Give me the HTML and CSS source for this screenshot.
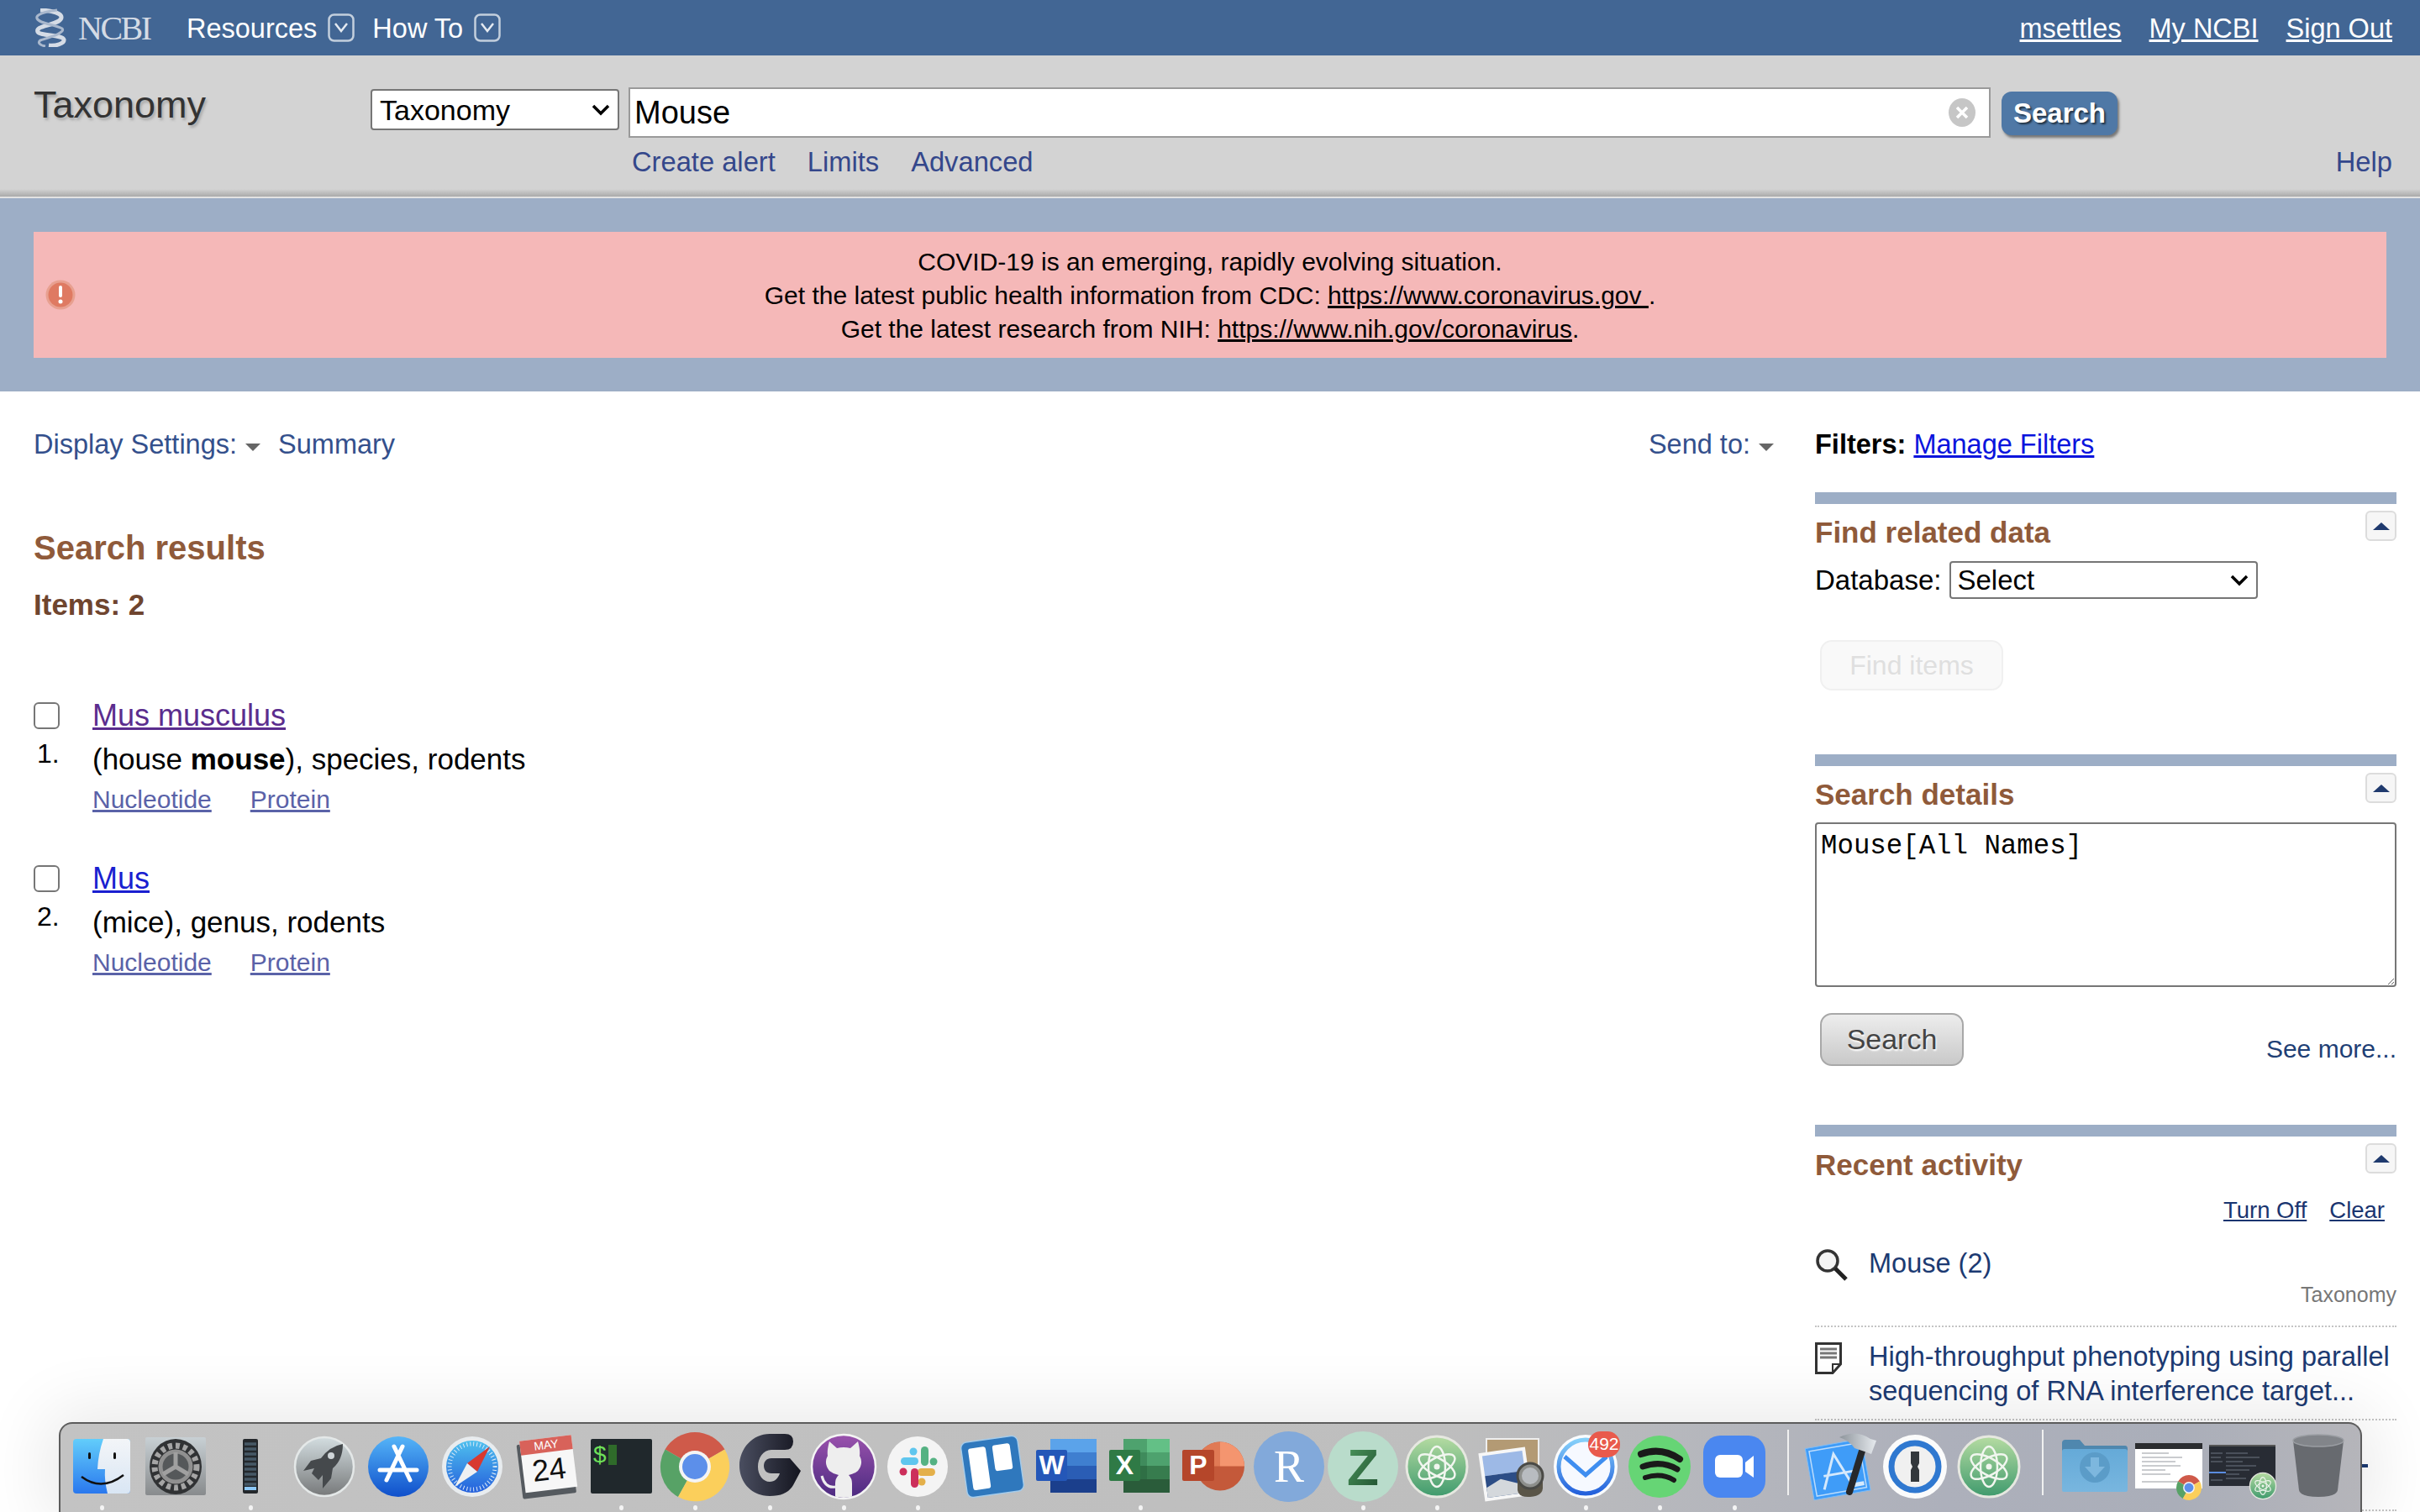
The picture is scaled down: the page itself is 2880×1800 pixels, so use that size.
FILE: index.html
```html
<!DOCTYPE html>
<html>
<head>
    <link rel="stylesheet" href="styles.css">
    <title>mouse - Taxonomy - NCBI</title>
</head>
<body>
    <svg class="defs">
        <defs>
            <linearGradient id="g-finder" x1="0" y1="0" x2="0" y2="1"><stop offset="0" stop-color="#62cdfb"/><stop offset="1" stop-color="#2a78ee"/></linearGradient>
            <linearGradient id="g-finder2" x1="0" y1="0" x2="0" y2="1"><stop offset="0" stop-color="#f3f5f8"/><stop offset="1" stop-color="#d9e6f4"/></linearGradient>
            <linearGradient id="g-prefs" x1="0" y1="0" x2="0" y2="1"><stop offset="0" stop-color="#c8d0d4"/><stop offset="1" stop-color="#888b8d"/></linearGradient>
            <linearGradient id="g-launch" x1="0" y1="0" x2="0" y2="1"><stop offset="0" stop-color="#d3dde0"/><stop offset="1" stop-color="#77797a"/></linearGradient>
            <linearGradient id="g-store" x1="0" y1="0" x2="0" y2="1"><stop offset="0" stop-color="#55b5f8"/><stop offset="1" stop-color="#0f4fcb"/></linearGradient>
            <linearGradient id="g-safari" x1="0" y1="0" x2="0" y2="1"><stop offset="0" stop-color="#4fc0ee"/><stop offset="1" stop-color="#2560dc"/></linearGradient>
            <linearGradient id="g-g" x1="0" y1="0" x2="1" y2="0"><stop offset="0" stop-color="#4a4e60"/><stop offset="1" stop-color="#14151f"/></linearGradient>
            <linearGradient id="g-hub" x1="0" y1="0" x2="0" y2="1"><stop offset="0" stop-color="#9a52ad"/><stop offset="1" stop-color="#4b2a80"/></linearGradient>
            <linearGradient id="g-atom" x1="0" y1="0" x2="0" y2="1"><stop offset="0" stop-color="#b6dca2"/><stop offset="1" stop-color="#3f9a6d"/></linearGradient>
            <linearGradient id="g-ring" x1="0" y1="0" x2="0" y2="1"><stop offset="0" stop-color="#85d0fa"/><stop offset="1" stop-color="#2461dc"/></linearGradient>
            <linearGradient id="g-z" x1="0" y1="0" x2="1" y2="1"><stop offset="0" stop-color="#4e9a5f"/><stop offset="1" stop-color="#1f4f2f"/></linearGradient>
            <linearGradient id="g-folder" x1="0" y1="0" x2="0" y2="1"><stop offset="0" stop-color="#65aad8"/><stop offset="1" stop-color="#78b6df"/></linearGradient>
            <linearGradient id="g-hammer" x1="0" y1="0" x2="1" y2="0"><stop offset="0" stop-color="#8d949b"/><stop offset="1" stop-color="#e6eaee"/></linearGradient>

            <symbol id="chrome" viewBox="0 0 88 88">
                <path d="M44 44L8.500 23.500A41 41 0 0 1 79.500 23.500Z" fill="#cf5a4a"/>
                <path d="M44 44L8.500 23.500A41 41 0 0 0 24 80Z" fill="#57a266"/>
                <path d="M44 44L79.500 23.500A41 41 0 0 1 24 80Z" fill="#fbcf5b"/>
                <circle cx="44" cy="44" r="19" fill="#f4f4f4"/>
                <circle cx="44" cy="44" r="15" fill="#5c8fea"/>
            </symbol>
            <symbol id="atom" viewBox="0 0 88 88">
                <circle cx="44" cy="44" r="36" fill="url(#g-atom)" stroke="#e6e8e0" stroke-width="3"/>
                <g fill="none" stroke="#f1f6ef" stroke-width="2.500">
                    <ellipse cx="44" cy="44" rx="10" ry="24"/>
                    <ellipse cx="44" cy="44" rx="10" ry="24" transform="rotate(60 44 44)"/>
                    <ellipse cx="44" cy="44" rx="10" ry="24" transform="rotate(-60 44 44)"/>
                </g>
                <circle cx="44" cy="44" r="3.500" fill="#f1f6ef"/>
            </symbol>
        </defs>
    </svg>

    <header class="topbar">
        <a class="logo">
            <svg class="helix" viewBox="0 0 40 46">
                <path d="M8 2C30 3 38 9 30 15C20 21 2 21 5 28C8 33 34 31 36 37C37 42 26 45 18 44" fill="none" stroke="#d5dce6" stroke-width="5"/>
                <path d="M28 2C14 4 2 7 4 12C7 18 24 19 34 24C38 29 20 34 8 38C4 41 8 44 14 45" fill="none" stroke="#a9b8cd" stroke-width="3"/>
            </svg>
            <span class="logo-text">NCBI</span>
        </a>
        <a class="nav-item">Resources</a>
        <svg class="nav-drop" viewBox="0 0 32 34"><rect x="1.500" y="1.500" width="29" height="31" rx="6" fill="none" stroke="#c3cfdd" stroke-width="2.500"/><path d="M9 12L16 21L23 12" fill="none" stroke="#e4eaf1" stroke-width="2.500"/></svg>
        <a class="nav-item">How To</a>
        <svg class="nav-drop" viewBox="0 0 32 34"><rect x="1.500" y="1.500" width="29" height="31" rx="6" fill="none" stroke="#c3cfdd" stroke-width="2.500"/><path d="M9 12L16 21L23 12" fill="none" stroke="#e4eaf1" stroke-width="2.500"/></svg>
        <nav class="user-links">
            <a>msettles</a>
            <a>My NCBI</a>
            <a>Sign Out</a>
        </nav>
    </header>

    <section class="masthead">
        <div class="search-row">
            <div class="db-title">Taxonomy</div>
            <div class="select-wrap db-wrap">
                <select class="db-select"><option>Taxonomy</option></select>
                <svg class="select-arrow" viewBox="0 0 22 14"><path d="M2 2L11 11L20 2" fill="none" stroke="#000" stroke-width="3.500"/></svg>
            </div>
            <div class="term-box">
                <input class="term" value="Mouse">
                <svg class="term-clear" viewBox="0 0 34 36"><ellipse cx="17" cy="18" rx="16" ry="17" fill="#c6c6c6"/><path d="M11 12L23 24M23 12L11 24" stroke="#fff" stroke-width="3.500"/></svg>
            </div>
            <button class="search-btn">Search</button>
        </div>
        <div class="link-row">
            <a>Create alert</a>
            <a>Limits</a>
            <a>Advanced</a>
            <a class="help">Help</a>
        </div>
    </section>

    <section class="band">
        <div class="notice">
            <svg class="notice-icon" viewBox="0 0 36 36">
                <circle cx="18" cy="18" r="17.500" fill="#e8a090"/>
                <circle cx="18" cy="18" r="14.500" fill="#df7a62"/>
                <rect x="16" y="7" width="4" height="14" rx="2" fill="#fff"/>
                <circle cx="18" cy="26" r="2.500" fill="#fff"/>
            </svg>
            <div class="notice-text">
                COVID-19 is an emerging, rapidly evolving situation.<br>
                Get the latest public health information from CDC: <a>https://www.coronavirus.gov </a>.<br>
                Get the latest research from NIH: <a>https://www.nih.gov/coronavirus</a>.
            </div>
        </div>
    </section>

    <main class="content">
        <div class="results">
            <div class="toolbar">
                <a>Display Settings:</a><span class="caret"></span><a class="summary">Summary</a>
                <a class="send-to">Send to:</a><span class="caret"></span>
            </div>
            <h2 class="results-title">Search results</h2>
            <div class="items">Items: 2</div>

            <div class="result first">
                <div class="result-mark">
                    <input type="checkbox" class="check">
                    <div class="num">1.</div>
                </div>
                <div class="result-body">
                    <a class="result-name visited">Mus musculus</a>
                    <div class="result-desc">(house <b>mouse</b>), species, rodents</div>
                    <div class="result-links"><a>Nucleotide</a><a>Protein</a></div>
                </div>
            </div>

            <div class="result">
                <div class="result-mark">
                    <input type="checkbox" class="check">
                    <div class="num">2.</div>
                </div>
                <div class="result-body">
                    <a class="result-name">Mus</a>
                    <div class="result-desc">(mice), genus, rodents</div>
                    <div class="result-links"><a>Nucleotide</a><a>Protein</a></div>
                </div>
            </div>
        </div>

        <aside class="sidebar">
            <div class="filters"><b>Filters:</b> <a>Manage Filters</a></div>

            <div class="panel">
                <div class="panel-head">
                    <h3>Find related data</h3>
                    <button class="toggle"><span></span></button>
                </div>
                <div class="db-row">
                    <label>Database:</label>
                    <div class="select-wrap">
                        <select class="panel-select"><option>Select</option></select>
                        <svg class="select-arrow" viewBox="0 0 22 14"><path d="M2 2L11 11L20 2" fill="none" stroke="#000" stroke-width="3.500"/></svg>
                    </div>
                </div>
                <button class="find-items">Find items</button>
            </div>

            <div class="panel details">
                <div class="panel-head">
                    <h3>Search details</h3>
                    <button class="toggle"><span></span></button>
                </div>
                <textarea class="query">Mouse[All Names]</textarea>
                <div class="details-foot">
                    <button class="details-btn">Search</button>
                    <a class="see-more">See more...</a>
                </div>
            </div>

            <div class="panel recent">
                <div class="panel-head">
                    <h3>Recent activity</h3>
                    <button class="toggle"><span></span></button>
                </div>
                <div class="recent-tools"><a>Turn Off</a><a>Clear</a></div>
                <div class="entry">
                    <div class="entry-row">
                        <svg class="entry-icon" viewBox="0 0 40 40"><circle cx="15" cy="15" r="12" fill="#f3f3f3" stroke="#333" stroke-width="3.500"/><path d="M24 24L37 37" stroke="#222" stroke-width="5"/></svg>
                        <a>Mouse (2)</a>
                    </div>
                    <div class="entry-db">Taxonomy</div>
                </div>
                <div class="entry paper">
                    <div class="entry-row">
                        <svg class="entry-icon" viewBox="0 0 32 38"><path d="M1.500 1.500H30.500V26L21 36.500H1.500Z" fill="#fff" stroke="#333" stroke-width="3"/><path d="M6 8H26M6 13H26M6 18H26" stroke="#777" stroke-width="3"/><path d="M21 36V26H30" fill="none" stroke="#333" stroke-width="2"/></svg>
                        <a class="entry-long">High-throughput phenotyping using parallel<br>sequencing of RNA interference target...</a>
                    </div>
                </div>
                <div class="entry tail"><span class="tail-dash"></span></div>
            </div>
        </aside>
    </main>

    <footer class="dock">
        <div class="app on"><svg viewBox="0 0 88 88">
            <rect x="10" y="11" width="68" height="65" rx="4" fill="url(#g-finder)"/>
            <path d="M46 11H74Q78 11 78 15V72Q78 76 74 76H51Q47 60 48 47H39Q40 28 46 11Z" fill="url(#g-finder2)"/>
            <rect x="28" y="27" width="3" height="8" rx="1.500" fill="#111"/><rect x="58" y="27" width="3" height="8" rx="1.500" fill="#111"/>
            <path d="M20 56Q44 74 70 54" fill="none" stroke="#111" stroke-width="2.500"/>
        </svg></div>
        <div class="app"><svg viewBox="0 0 88 88">
            <rect x="8" y="9" width="72" height="69" rx="2" fill="url(#g-prefs)"/>
            <ellipse cx="44" cy="44" rx="31" ry="33" fill="#303234"/>
            <circle cx="44" cy="44" r="25" fill="none" stroke="#a5a5a5" stroke-width="7" stroke-dasharray="5 4"/>
            <circle cx="44" cy="44" r="18" fill="#55585a" stroke="#909090" stroke-width="5"/>
            <path d="M44 44V27M44 44L29 53M44 44L59 53" stroke="#a0a0a0" stroke-width="5"/>
        </svg></div>
        <div class="app on"><svg viewBox="0 0 88 88">
            <rect x="35" y="11" width="18" height="65" rx="2" fill="#23272b"/>
            <path d="M37 17H51M37 23H51M37 29H51M37 35H51M37 41H51M37 47H51M37 53H51M37 59H51M37 65H51" stroke="#465866" stroke-width="3.500"/>
            <rect x="37" y="68" width="14" height="4" fill="#8cc8f8"/>
        </svg></div>
        <div class="app"><svg viewBox="0 0 88 88">
            <circle cx="44" cy="44" r="35" fill="url(#g-launch)" stroke="#e4e8e8" stroke-width="2.500"/>
            <path d="M66 17Q50 20 40 34L28 37L19 49L32 46L29 52L37 60L42 54L42 70L52 58L54 46Q66 36 66 17Z" fill="#45494c"/>
            <circle cx="52" cy="31" r="4" fill="#cfd5d8"/>
        </svg></div>
        <div class="app"><svg viewBox="0 0 88 88">
            <circle cx="44" cy="44" r="36" fill="url(#g-store)"/>
            <path d="M39 20L58 60M49 20L30 60M22 48H66" stroke="#fff" stroke-width="5" stroke-linecap="round"/>
        </svg></div>
        <div class="app"><svg viewBox="0 0 88 88">
            <circle cx="44" cy="44" r="36" fill="#e8ecef"/>
            <circle cx="44" cy="44" r="31" fill="url(#g-safari)"/>
            <circle cx="44" cy="44" r="27" fill="none" stroke="#dbeaf7" stroke-width="5" stroke-dasharray="1 3"/>
            <polygon points="65,20 50,50 38,40" fill="#d8392f"/>
            <polygon points="23,68 38,40 50,50" fill="#eef0f2"/>
        </svg></div>
        <div class="app"><svg viewBox="0 0 88 88">
            <g transform="rotate(-7 44 44)">
                <rect x="11" y="14" width="64" height="65" rx="2" fill="#555a5f"/>
                <rect x="15" y="10" width="62" height="62" fill="#f7f7f7"/>
                <rect x="15" y="10" width="62" height="17" fill="#d8625a"/>
                <text class="cal-month" x="46" y="23">MAY</text>
                <text class="cal-day" x="46" y="60">24</text>
            </g>
        </svg></div>
        <div class="app on"><svg viewBox="0 0 88 88">
            <rect x="8" y="11" width="73" height="65" rx="2" fill="#20282c"/>
            <text class="term-sign" x="11" y="39">$</text>
            <rect x="29" y="18" width="10" height="24" fill="#2f6b2a"/>
        </svg></div>
        <div class="app on"><svg viewBox="0 0 88 88"><use href="#chrome" width="88" height="88"/></svg></div>
        <div class="app on"><svg viewBox="0 0 88 88">
            <path d="M62 5Q72 5 72 14Q72 24 62 24H46C36 24 30 34 30 44C30 54 36 62 44 62C50 62 54 58 56 52H46C40 52 37 48 37 43C37 38 40 34 46 34H68L81 49L72 66C66 76 56 79 44 79C22 79 8 62 8 43C8 22 24 5 44 5Z" fill="url(#g-g)"/>
        </svg></div>
        <div class="app on"><svg viewBox="0 0 88 88">
            <clipPath id="hub-clip"><circle cx="44" cy="44" r="37"/></clipPath>
            <circle cx="44" cy="44" r="38" fill="url(#g-hub)" stroke="#f4f4f4" stroke-width="2.500"/>
            <g clip-path="url(#hub-clip)" fill="#eeeeee">
                <path d="M27 14L36 22Q44 20 52 22L61 14Q64 25 63 31Q68 40 61 49Q56 53 50 54Q54 58 54 64L54 84L34 84L34 64Q34 58 38 54Q32 53 27 49Q20 40 25 31Q24 25 27 14Z"/>
                <path d="M34 68Q22 70 18 55" fill="none" stroke="#eeeeee" stroke-width="3"/>
            </g>
        </svg></div>
        <div class="app on"><svg viewBox="0 0 88 88">
            <circle cx="44" cy="44" r="36" fill="#f4f4f4"/>
            <rect x="48" y="20" width="9" height="23" rx="4.500" fill="#55b283"/>
            <rect x="24" y="33" width="21" height="9" rx="4.500" fill="#5fc6ee"/>
            <circle cx="39" cy="26" r="4.500" fill="#5fc6ee"/>
            <circle cx="63" cy="38" r="4.500" fill="#55b283"/>
            <rect x="44" y="46" width="21" height="9" rx="4.500" fill="#e4b04a"/>
            <circle cx="49" cy="62" r="4.500" fill="#e4b04a"/>
            <rect x="36" y="46" width="9" height="23" rx="4.500" fill="#cc2f5b"/>
            <circle cx="27" cy="50" r="4.500" fill="#cc2f5b"/>
        </svg></div>
        <div class="app"><svg viewBox="0 0 88 88">
            <g transform="rotate(-8 44 44)">
                <rect x="10" y="11" width="68" height="66" rx="7" fill="#2f78bd" stroke="#a4cbea" stroke-width="1.500"/>
                <rect x="18" y="19" width="21" height="50" rx="3" fill="#fff"/>
                <rect x="47" y="19" width="21" height="31" rx="3" fill="#fff"/>
            </g>
        </svg></div>
        <div class="app"><svg viewBox="0 0 88 88">
            <rect x="25" y="11" width="55" height="16" fill="#5ba3ea"/><rect x="25" y="27" width="55" height="16" fill="#3f7fd0"/>
            <rect x="25" y="43" width="55" height="16" fill="#2a5db5"/><rect x="25" y="59" width="55" height="16" fill="#1b3f8c"/>
            <rect x="8" y="24" width="37" height="37" rx="2" fill="#2457b8"/>
            <text class="office" x="26.500" y="53">W</text>
        </svg></div>
        <div class="app on"><svg viewBox="0 0 88 88">
            <rect x="24" y="11" width="28" height="16" fill="#4ea26e"/><rect x="52" y="11" width="27" height="16" fill="#63c086"/>
            <rect x="24" y="27" width="28" height="16" fill="#3f8b5c"/><rect x="52" y="27" width="27" height="16" fill="#4ea26e"/>
            <rect x="24" y="43" width="28" height="16" fill="#2f6f45"/><rect x="52" y="43" width="27" height="16" fill="#377c4e"/>
            <rect x="24" y="59" width="55" height="16" fill="#2a5c3a"/>
            <rect x="7" y="24" width="37" height="37" rx="2" fill="#2f7a46"/>
            <text class="office" x="25.500" y="53">X</text>
        </svg></div>
        <div class="app"><svg viewBox="0 0 88 88">
            <circle cx="51" cy="43.500" r="29" fill="#c4593a"/>
            <path d="M51 14.500A29 29 0 0 1 80 43.500H51Z" fill="#f4956f"/>
            <path d="M51 14.500A29 29 0 0 0 22 43.500H51Z" fill="#e07a55"/>
            <rect x="6" y="24" width="38" height="37" rx="2" fill="#b5462a"/>
            <text class="office" x="25" y="53">P</text>
        </svg></div>
        <div class="app"><svg viewBox="0 0 88 88">
            <circle cx="44" cy="44" r="42" fill="#82a9da"/>
            <text class="r-letter" x="44" y="62">R</text>
        </svg></div>
        <div class="app on"><svg viewBox="0 0 88 88">
            <circle cx="44" cy="44" r="42" fill="#b9dccb"/>
            <text class="z-letter" x="44" y="66">Z</text>
        </svg></div>
        <div class="app on"><svg viewBox="0 0 88 88"><use href="#atom" width="88" height="88"/></svg></div>
        <div class="app"><svg viewBox="0 0 88 88">
            <rect x="14" y="11" width="62" height="54" fill="#b39a74" stroke="#eee" stroke-width="2"/>
            <g transform="rotate(-8 36 52)">
                <rect x="8" y="24" width="56" height="58" fill="#f7f7f7"/>
                <rect x="12" y="28" width="48" height="24" fill="#9db9e6"/>
                <rect x="12" y="52" width="48" height="26" fill="#2c4d86"/>
                <path d="M12 66L30 58L60 70V78H12Z" fill="#d4d8dc"/>
            </g>
            <path d="M51 56V72Q52 81 66 80Q80 79 81 70V56Z" fill="#5a5548"/>
            <circle cx="66" cy="55" r="15" fill="#8d8f8c" stroke="#4a4a46" stroke-width="3"/>
            <circle cx="66" cy="55" r="10" fill="#b8bcc0"/>
        </svg></div>
        <div class="app on"><svg viewBox="0 0 88 88">
            <circle cx="44" cy="44" r="38" fill="#fafcfe"/>
            <circle cx="44" cy="44" r="32" fill="#f6f9ff" stroke="url(#g-ring)" stroke-width="5"/>
            <path d="M19 32L44 54L69 32" fill="none" stroke="#3f8ef0" stroke-width="5"/>
            <rect class="badge" x="47" y="2" width="38" height="31" rx="15" fill="#e95a4c"/>
            <text class="badge-count" x="66" y="24">492</text>
        </svg></div>
        <div class="app on"><svg viewBox="0 0 88 88">
            <circle cx="44" cy="44" r="37" fill="#66d575"/>
            <path d="M22 29Q46 20 68 35" fill="none" stroke="#1a1a1a" stroke-width="8" stroke-linecap="round"/>
            <path d="M24 44Q46 36 65 47" fill="none" stroke="#1a1a1a" stroke-width="7" stroke-linecap="round"/>
            <path d="M27 57Q46 51 61 60" fill="none" stroke="#1a1a1a" stroke-width="6" stroke-linecap="round"/>
        </svg></div>
        <div class="app on"><svg viewBox="0 0 88 88">
            <rect x="7" y="7" width="74" height="74" rx="20" fill="#4a87f0"/>
            <rect x="21" y="30" width="33" height="27" rx="6" fill="#fff"/>
            <path d="M57 39L67 31V57L57 50Z" fill="#fff"/>
        </svg></div>
        <div class="dock-sep"></div>
        <div class="app"><svg viewBox="0 0 88 88">
            <g transform="rotate(-10 42 46)">
                <rect x="6" y="16" width="68" height="62" fill="#3f9cf8" stroke="#7ebdf8"/>
                <rect x="10" y="20" width="60" height="54" fill="none" stroke="#bcdcfb" stroke-width="1.500"/>
                <path d="M20 68L38 28L54 68M22 52H58" fill="none" stroke="#d5e9fc" stroke-width="3"/>
                <rect x="54" y="66" width="14" height="5" fill="#d5e9fc"/>
            </g>
            <path d="M70 22L54 74" stroke="#26282b" stroke-width="8" stroke-linecap="round"/>
            <path d="M42 9Q62 -1 79 11L86 13L80 29L72 26L60 22Q54 13 42 9Z" fill="url(#g-hammer)"/>
        </svg></div>
        <div class="app"><svg viewBox="0 0 88 88">
            <circle cx="44" cy="44" r="38" fill="#fbfbfb"/>
            <circle cx="44" cy="44" r="28" fill="#f0f0f0" stroke="#2f78d0" stroke-width="7"/>
            <path d="M39 26H49V40L47 44L49 48V62H39V48L41 44L39 40Z" fill="#33383c"/>
        </svg></div>
        <div class="app"><svg viewBox="0 0 88 88"><use href="#atom" width="88" height="88"/></svg></div>
        <div class="dock-sep right"></div>
        <div class="app"><svg viewBox="0 0 88 88">
            <path d="M5 16Q5 12 9 12H26L32 19H80Q83 19 83 23V40H5Z" fill="#4f87ae"/>
            <path d="M5 26Q5 23 8 23H80Q83 23 83 26V72Q83 74 80 74H8Q5 74 5 72Z" fill="url(#g-folder)"/>
            <ellipse cx="44" cy="45" rx="18" ry="18" fill="#5b9cc8"/>
            <path d="M39 33H49V44H56L44 57L32 44H39Z" fill="#7db7de"/>
        </svg></div>
        <div class="app"><svg viewBox="0 0 88 88">
            <rect x="4" y="16" width="80" height="54" fill="#fff"/>
            <rect x="4" y="16" width="80" height="7" fill="#2b2d30"/>
            <path d="M12 28H44M12 33H60M12 38H52M12 43H58M12 48H40M12 53H46M12 62H56" stroke="#b9bcc0" stroke-width="1.500"/>
            <use href="#chrome" x="52" y="50" width="32" height="38"/>
        </svg></div>
        <div class="app"><svg viewBox="0 0 88 88">
            <rect x="4" y="18" width="79" height="49" fill="#282c34"/>
            <rect x="4" y="18" width="79" height="2" fill="#555"/>
            <path d="M24 28H50M24 33H64M24 38H44M24 43H60M24 48H52M24 53H40M24 58H48M6 28H20M6 33H18M6 38H20M6 60H20" stroke="#6d7480" stroke-width="1"/>
            <rect x="4" y="50" width="20" height="2" fill="#5a8de0"/>
            <use href="#atom" x="49" y="48" width="38" height="38"/>
        </svg></div>
        <div class="app"><svg viewBox="0 0 88 88">
            <path d="M15 13L22 72Q24 80 45 80Q66 80 68 72L75 13Z" fill="#676a6f"/>
            <ellipse cx="45" cy="13" rx="30" ry="7" fill="#82858a" stroke="#9a9da2" stroke-width="1.500"/>
        </svg></div>
    </footer>
</body>
</html>
```

FILE: styles.css
```css
html, body {
    margin: 0;
    height: 100%;
    overflow: hidden;
}

body {
    position: relative;
    background: #fff;
    color: #000;
    font-family: "Liberation Sans", Arial, sans-serif;
    font-size: 32px;
}

.defs {
    position: absolute;
    width: 0;
    height: 0;
}

/* top bar */
.topbar {
    display: flex;
    align-items: center;
    height: 66px;
    box-sizing: border-box;
    padding: 0 33px 0 40px;
    background: #426694;
    color: #fff;
}

.logo {
    display: flex;
    align-items: center;
    width: 182px;
}

.helix {
    width: 40px;
    height: 46px;
}

.logo-text {
    margin-left: 13px;
    font-family: "Liberation Serif", serif;
    font-size: 40px;
    letter-spacing: -2.500px;
    color: #d4dbe5;
}

.nav-item {
    padding-top: 3px;
    font-size: 32.500px;
}

.nav-drop {
    width: 32px;
    height: 34px;
    margin: 0 21px 0 13px;
}

.user-links {
    display: flex;
    gap: 33px;
    margin-left: auto;
    padding-top: 3px;
    font-size: 32.500px;
}

.user-links a {
    text-decoration: underline;
}

/* database and term */
.masthead {
    height: 130px;
    padding: 38px 33px 0 40px;
    background: linear-gradient(#d3d3d3 calc(100% - 9px), #a9a9a9);
    border-bottom: 2px solid #e2e2e2;
}

.search-row {
    display: flex;
    align-items: flex-start;
}

.db-title {
    width: 401px;
    font-size: 45px;
    line-height: 50px;
    margin-top: -4px;
    color: #333;
    text-shadow: 2px 3px 3px #aaa;
}

.select-wrap {
    position: relative;
}

.select-arrow {
    position: absolute;
    top: 50%;
    right: 11px;
    width: 22px;
    height: 14px;
    margin-top: -7px;
}

.db-wrap {
    margin-top: 2px;
}

.db-select {
    display: block;
    appearance: none;
    width: 296px;
    height: 49px;
    padding: 0 9px;
    border: 2px solid #767676;
    border-radius: 4px;
    background: #fff;
    color: #000;
    font-family: "Liberation Sans", sans-serif;
    font-size: 34px;
}

.term-box {
    position: relative;
    margin-left: 11px;
}

.term {
    display: block;
    width: 1621px;
    height: 60px;
    box-sizing: border-box;
    padding: 0 5px;
    border: 2px solid #9a9a9a;
    outline: none;
    font-family: "Liberation Sans", sans-serif;
    font-size: 38px;
}

.term-clear {
    position: absolute;
    top: 12px;
    right: 17px;
    width: 34px;
    height: 36px;
}

.search-btn {
    height: 52px;
    width: 138px;
    margin: 5px 0 0 13px;
    padding: 0;
    border: none;
    border-radius: 12px;
    background: #4f78a6;
    box-shadow: 2px 3px 3px #777;
    color: #fff;
    font-family: "Liberation Sans", sans-serif;
    font-size: 33px;
    font-weight: bold;
    text-shadow: 2px 2px 2px #234;
}

.link-row {
    display: flex;
    gap: 38px;
    margin-top: 9px;
    padding-left: 712px;
    font-size: 32.700px;
    line-height: 40px;
    color: #34478b;
}

.help {
    margin-left: auto;
}

/* notice */
.band {
    height: 230px;
    box-sizing: border-box;
    padding: 40px;
    background: #9daec6;
}

.notice {
    display: grid;
    grid-template-columns: 50px 1fr 50px;
    align-items: center;
    height: 150px;
    padding-left: 14px;
    padding-right: 14px;
    background: #f5b8b8;
}

.notice-icon {
    width: 36px;
    height: 36px;
}

.notice-text {
    padding-top: 2px;
    text-align: center;
    line-height: 40px;
    font-size: 30px;
}

.notice-text a {
    text-decoration: underline;
}

/* main */
.content {
    display: flex;
    padding: 43px 28px 0 40px;
}

.results {
    width: 2071px;
    margin-right: 49px;
}

.toolbar {
    display: flex;
    align-items: center;
    font-size: 32.500px;
    line-height: 40px;
    color: #34508c;
}

.caret {
    width: 0;
    height: 0;
    margin: 6px 0 0 10px;
    border-style: solid;
    border-width: 9px 9px 0;
    border-color: #666 transparent transparent;
}

.summary {
    margin-left: 21px;
}

.send-to {
    margin-left: auto;
}

.results-title {
    margin: 79px 0 0;
    font-size: 40px;
    line-height: 48px;
    color: #8f5a3a;
}

.items {
    margin-top: 22px;
    font-size: 35px;
    font-weight: bold;
    line-height: 44px;
    color: #6f452f;
}

.result {
    display: flex;
    margin-top: 54px;
}

.result.first {
    margin-top: 88px;
}

.result-mark {
    width: 70px;
}

.check {
    display: block;
    appearance: none;
    width: 31px;
    height: 32px;
    margin: 6px 0 0;
    border: 2px solid #767676;
    border-radius: 6px;
    background: #fff;
}

.num {
    margin: 9px 0 0 4px;
    line-height: 40px;
}

.result-name {
    display: block;
    font-size: 36px;
    line-height: 44px;
    color: #1a1fd0;
    text-decoration: underline;
}

.result-name.visited {
    color: #5b2d8e;
}

.result-desc {
    margin-top: 8px;
    font-size: 35px;
    line-height: 44px;
}

.result-links {
    display: flex;
    gap: 46px;
    margin-top: 8px;
    font-size: 30px;
    line-height: 36px;
    color: #5a62a8;
    text-decoration: underline;
}

/* right column */
.sidebar {
    width: 692px;
}

.filters {
    font-size: 32.500px;
    line-height: 40px;
}

.filters a {
    color: #0a14dd;
    text-decoration: underline;
}

.panel {
    margin-top: 37px;
    border-top: 14px solid #9daec6;
}

.panel.details {
    margin-top: 76px;
}

.panel.recent {
    margin-top: 70px;
}

.panel-head {
    display: flex;
    justify-content: space-between;
    align-items: flex-start;
}

.panel-head h3 {
    margin: 12px 0 0;
    font-size: 35px;
    line-height: 44px;
    color: #8f5a3a;
}

.toggle {
    display: flex;
    align-items: center;
    justify-content: center;
    width: 37px;
    height: 36px;
    margin-top: 8px;
    padding: 0;
    border: 2px solid #dcdcdc;
    border-radius: 6px;
    background: #f6f6f6;
}

.toggle span {
    width: 0;
    height: 0;
    border-style: solid;
    border-width: 0 10px 9px;
    border-color: transparent transparent #1f3a6e;
}

.db-row {
    display: flex;
    align-items: center;
    gap: 10px;
    margin-top: 12px;
    font-size: 33px;
}

.panel-select {
    display: block;
    appearance: none;
    width: 367px;
    height: 45px;
    padding: 0 7px;
    border: 2px solid #767676;
    border-radius: 4px;
    background: #fff;
    color: #000;
    font-family: "Liberation Sans", sans-serif;
    font-size: 33px;
}

.find-items {
    display: block;
    width: 218px;
    height: 60px;
    margin: 49px 0 0 6px;
    padding: 0;
    border: 2px solid #f0f0f0;
    border-radius: 14px;
    background: #f9f9f9;
    color: #dfdfdf;
    font-family: "Liberation Sans", sans-serif;
    font-size: 32px;
}

.query {
    display: block;
    width: 692px;
    height: 196px;
    margin-top: 11px;
    box-sizing: border-box;
    padding: 9px 5px 4px;
    border: 2px solid #767676;
    border-radius: 4px;
    font-family: "Liberation Mono", monospace;
    font-size: 32.400px;
    line-height: 36px;
}

.details-foot {
    display: flex;
    justify-content: space-between;
    align-items: flex-end;
    margin-top: 31px;
    padding-left: 6px;
}

.details-btn {
    width: 171px;
    height: 63px;
    padding: 0;
    border: 2px solid #a8a8a8;
    border-radius: 14px;
    background: linear-gradient(#ededed, #c9c9c9);
    color: #444;
    font-family: "Liberation Sans", sans-serif;
    font-size: 34px;
    text-shadow: 1px 2px 2px #fff;
}

.see-more {
    margin-bottom: 2px;
    font-size: 30px;
    line-height: 36px;
    color: #1f3f75;
}

.recent-tools {
    display: flex;
    justify-content: flex-end;
    gap: 27px;
    margin-top: 14px;
    padding-right: 14px;
    font-size: 27.500px;
    line-height: 36px;
    color: #1a3570;
    text-decoration: underline;
}

.entry {
    border-bottom: 2px dotted #c4c4c4;
}

.entry-row {
    display: flex;
    align-items: flex-start;
    font-size: 32.500px;
    line-height: 40px;
    color: #1c3a72;
}

.entry-icon {
    flex: none;
    width: 40px;
    height: 40px;
    margin: 2px 24px 0 0;
}

.entry-long {
    white-space: nowrap;
    line-height: 41px;
}

.recent-tools + .entry {
    margin-top: 25px;
    padding-bottom: 22px;
}

.entry-db {
    margin-top: 0;
    text-align: right;
    font-size: 25px;
    line-height: 30px;
    color: #777;
}

.entry.paper {
    margin-top: 15px;
    padding-bottom: 12px;
}

.entry.paper .entry-icon {
    width: 32px;
    margin-right: 32px;
}

.entry.tail {
    display: flex;
    justify-content: flex-end;
    height: 108px;
    padding: 52px 34px 0 0;
    box-sizing: border-box;
}

.tail-dash {
    width: 32px;
    height: 4px;
    background: #1c3a72;
}

/* dock, lies over the page */
.dock {
    position: absolute;
    left: 70px;
    bottom: 0;
    width: 2741px;
    height: 107px;
    box-sizing: border-box;
    display: flex;
    padding: 7px 0 0 5px;
    border: 2px solid #5c5c5c;
    border-bottom: none;
    border-radius: 16px 16px 0 0;
    background: linear-gradient(90deg, #c3c3c3 0%, #bebebe 60%, #adb0bb 82%, #aaaeb9 92%, #b5b5ba 100%);
    box-shadow: 0 0 80px 14px rgba(0, 0, 0, 0.09);
}

.app {
    position: relative;
    flex: none;
    width: 88.300px;
    height: 88px;
}

.app svg {
    display: block;
    width: 88px;
    height: 88px;
}

.app.on::after {
    content: "";
    position: absolute;
    left: 42px;
    top: 90px;
    width: 5px;
    height: 6px;
    border-radius: 50%;
    background: #f4f4f4;
}

.dock-sep {
    flex: none;
    width: 2px;
    height: 78px;
    margin: 0 18px 0 19px;
    background: #f0f0f0;
}

.dock-sep.right {
    margin: 0 17px 0 18px;
}

.cal-month, .cal-day, .office, .badge-count, .r-letter, .z-letter {
    font-family: "Liberation Sans", sans-serif;
    text-anchor: middle;
}

.cal-month {
    font-size: 14px;
    fill: #fff;
}

.cal-day {
    font-size: 36px;
    fill: #111;
}

.term-sign {
    font-family: "Liberation Sans", sans-serif;
    font-size: 28px;
    fill: #6ee05a;
}

.office {
    font-size: 32px;
    font-weight: bold;
    fill: #fff;
}

.badge-count {
    font-size: 21px;
    fill: #fff;
}

.r-letter {
    font-family: "Liberation Serif", serif;
    font-size: 54px;
    fill: #fff;
}

.z-letter {
    font-size: 62px;
    font-weight: bold;
    fill: url(#g-z);
}
```
